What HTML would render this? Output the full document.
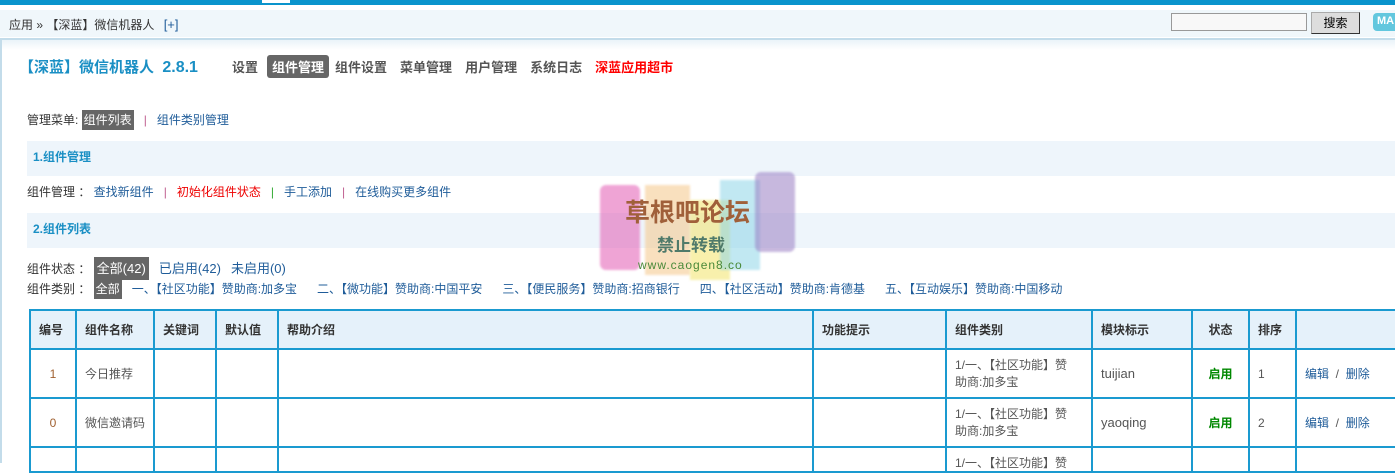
<!DOCTYPE html>
<html><head><meta charset="utf-8"><style>
*{margin:0;padding:0;box-sizing:border-box}
body{width:1395px;height:463px;overflow:hidden;background:#fff;font-family:"Liberation Sans","Noto Sans CJK SC",sans-serif;font-size:12px;color:#333;position:relative}
.a{position:absolute;white-space:nowrap}
a,.l{color:#1f5c99;text-decoration:none}
.sec{position:absolute;left:27px;right:0;background:#eef5fb;color:#1a8fc4;font-weight:bold;font-size:12px;padding-left:6px}
.sep{margin:0 10px}
.tab{display:inline-block;padding:2px 5px}
.tab.on{background:#666;color:#fff;border-radius:3px}
.dk{background:#666;color:#fff;padding:3px 2px}
table{position:absolute;left:29px;top:309px;border-collapse:collapse;table-layout:fixed;width:1366px}
td,th{border:2px solid #1a9ad0;height:49px;text-align:left;padding-left:8px;font-size:12px;color:#555;font-weight:normal;white-space:nowrap;overflow:hidden}
th{background:#e5f1fa;height:39px;color:#333;font-weight:bold}
tr:last-child td{height:20px;vertical-align:top;padding-top:6px}
.wm{position:absolute;opacity:.55;filter:blur(1px)}
</style></head><body>
<div class="a" style="left:0;top:0;width:1395px;height:5px;background:#0a94cc"></div>
<div class="a" style="left:262px;top:0;width:28px;height:3px;background:#fff"></div>
<div class="a" style="left:0;top:10px;width:1395px;height:27px;background:#f0f7fb"></div>
<div class="a" style="left:0;top:38px;width:1395px;height:2px;background:#c3dcea"></div>
<div class="a" style="left:0;top:40px;width:1395px;height:10px;background:linear-gradient(#eaf3f9,#fff)"></div>
<div class="a" style="left:0;top:40px;width:2px;height:423px;background:#c3dcea"></div>
<div class="a" style="left:9px;top:16px;font-size:12px;color:#333">应用 » 【深蓝】微信机器人 <span class="l" style="margin-left:6px;font-size:13px">[+]</span></div>
<div class="a" style="left:1171px;top:13px;width:136px;height:18px;border:1px solid #999;background:#f8f8f8"></div>
<div class="a" style="left:1311px;top:12px;width:49px;height:22px;border:1px solid #333;border-top-color:#aaa;border-left-color:#aaa;background:#ddd;text-align:center;line-height:20px;font-size:12px;color:#000">搜索</div>
<div class="a" style="left:1373px;top:13px;width:30px;height:18px;background:#62c7de;border-radius:4px;color:#fff;font-weight:bold;font-size:11px;padding:2px 0 0 4px">MA</div>

<div class="a" style="left:19px;top:56px;font-size:15px;font-weight:bold;color:#1a8fc4">【深蓝】微信机器人&nbsp; <span style="font-size:16px">2.8.1</span></div>
<div class="a" style="left:227px;top:55px;font-size:13px;font-weight:bold;color:#555">
<span class="tab">设置</span><span class="tab on" style="margin-left:4px">组件管理</span><span class="tab" style="margin-left:1px">组件设置</span><span class="tab" style="margin-left:3px">菜单管理</span><span class="tab" style="margin-left:3px">用户管理</span><span class="tab" style="margin-left:3px">系统日志</span><span class="tab" style="color:#f00;margin-left:3px">深蓝应用超市</span></div>

<div class="a" style="left:27px;top:111px">管理菜单: <span class="dk">组件列表</span><span class="sep" style="color:#c06090">|</span><span class="l">组件类别管理</span></div>
<div class="sec" style="top:141px;height:35px;line-height:33px">1.组件管理</div>
<div class="a" style="left:27px;top:183px">组件管理 ： <span class="l">查找新组件</span><span class="sep" style="color:#c06090">|</span><span style="color:#e00">初始化组件状态</span><span class="sep" style="color:#3a3">|</span><span class="l">手工添加</span><span class="sep" style="color:#c06090">|</span><span class="l">在线购买更多组件</span></div>
<div class="sec" style="top:213px;height:35px;line-height:33px">2.组件列表</div>
<div class="a" style="left:27px;top:258px">组件状态 ： <span class="dk" style="padding:4px 3px;font-size:13px">全部(42)</span>&nbsp;&nbsp; <span class="l" style="font-size:13px">已启用(42)</span>&nbsp;&nbsp; <span class="l" style="font-size:13px">未启用(0)</span></div>
<div class="a" style="left:27px;top:280px;word-spacing:0">组件类别 ： <span class="dk" style="padding:3px 2px">全部</span>&nbsp;&nbsp; <span class="l">一、【社区功能】赞助商:加多宝&nbsp;&nbsp;&nbsp;&nbsp;&nbsp; 二、【微功能】赞助商:中国平安&nbsp;&nbsp;&nbsp;&nbsp;&nbsp; 三、【便民服务】赞助商:招商银行&nbsp;&nbsp;&nbsp;&nbsp;&nbsp; 四、【社区活动】赞助商:肯德基&nbsp;&nbsp;&nbsp;&nbsp;&nbsp; 五、【互动娱乐】赞助商:中国移动</span></div>

<table>
<colgroup><col style="width:46px"><col style="width:78px"><col style="width:62px"><col style="width:62px"><col style="width:535px"><col style="width:133px"><col style="width:146px"><col style="width:100px"><col style="width:57px"><col style="width:47px"><col style="width:100px"></colgroup>
<tr><th>编号</th><th>组件名称</th><th>关键词</th><th>默认值</th><th>帮助介绍</th><th>功能提示</th><th>组件类别</th><th>模块标示</th><th style="text-align:center;padding:0">状态</th><th>排序</th><th></th></tr>
<tr><td style="text-align:center;padding:0;color:#a06030">1</td><td>今日推荐</td><td></td><td></td><td></td><td></td><td style="line-height:17px">1/一、【社区功能】赞<br>助商:加多宝</td><td style="font-size:13px">tuijian</td><td style="text-align:center;padding:0;color:#080;font-weight:bold">启用</td><td>1</td><td><span class="l">编辑</span> &nbsp;/&nbsp; <span class="l">删除</span></td></tr>
<tr><td style="text-align:center;padding:0;color:#a06030">0</td><td>微信邀请码</td><td></td><td></td><td></td><td></td><td style="line-height:17px">1/一、【社区功能】赞<br>助商:加多宝</td><td style="font-size:13px">yaoqing</td><td style="text-align:center;padding:0;color:#080;font-weight:bold">启用</td><td>2</td><td><span class="l">编辑</span> &nbsp;/&nbsp; <span class="l">删除</span></td></tr>
<tr><td></td><td></td><td></td><td></td><td></td><td></td><td>1/一、【社区功能】赞</td><td></td><td></td><td></td><td></td></tr>
</table>

<div class="wm" style="left:600px;top:185px;width:40px;height:85px;background:#e35bb4;border-radius:6px"></div>
<div class="wm" style="left:645px;top:185px;width:45px;height:90px;background:#f5c78a"></div>
<div class="wm" style="left:690px;top:200px;width:40px;height:80px;background:#f3e46a"></div>
<div class="wm" style="left:720px;top:180px;width:40px;height:90px;background:#8fd6e8"></div>
<div class="wm" style="left:755px;top:172px;width:40px;height:80px;background:#9b7fc4;border-radius:6px"></div>
<div class="a" style="left:625px;top:193px;font-size:25px;font-weight:bold;color:#a0603a">草根吧论坛</div>
<div class="a" style="left:657px;top:231px;font-size:17px;font-weight:bold;color:#4f7a6a">禁止转载</div>
<div class="a" style="left:638px;top:258px;font-size:12px;color:#4a8a3a;letter-spacing:1px">www.caogen8.co</div>
</body></html>
